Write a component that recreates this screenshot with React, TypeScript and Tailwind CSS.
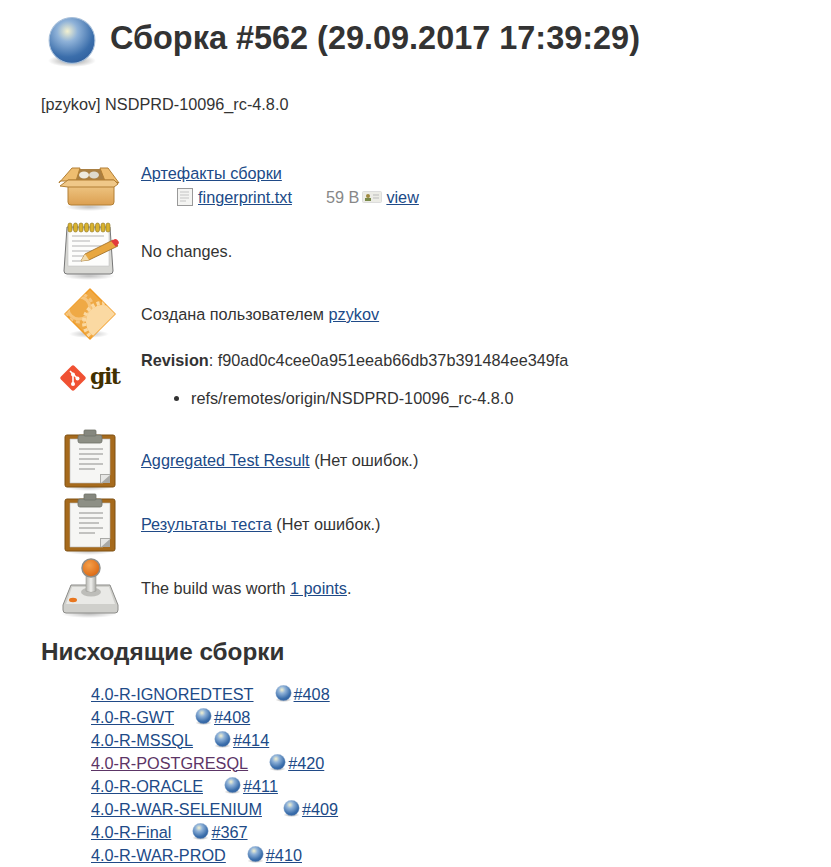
const downstream = [
  { name: "4.0-R-IGNOREDTEST", build: "#408" },
  { name: "4.0-R-GWT", build: "#408" },
  { name: "4.0-R-MSSQL", build: "#414" },
  { name: "4.0-R-POSTGRESQL", build: "#420", visited: true },
  { name: "4.0-R-ORACLE", build: "#411" },
  { name: "4.0-R-WAR-SELENIUM", build: "#409" },
  { name: "4.0-R-Final", build: "#367" },
  { name: "4.0-R-WAR-PROD", build: "#410" },
];

const link = "text-[#204a87] underline";

const Ball = ({ size, id }: { size: number; id: string }) => (
  <svg width={size} height={size} viewBox="0 0 48 48" className="shrink-0">
    <defs>
      <radialGradient id={id} cx="0.4" cy="0.3" r="0.75">
        <stop offset="0" stopColor="#f3f1d0" />
        <stop offset="0.3" stopColor="#8fb2d8" />
        <stop offset="0.75" stopColor="#3b6eab" />
        <stop offset="1" stopColor="#2f5f9e" />
      </radialGradient>
      <radialGradient id={id + "s"}>
        <stop offset="0" stopColor="#000" stopOpacity="0.4" />
        <stop offset="1" stopColor="#000" stopOpacity="0" />
      </radialGradient>
    </defs>
    <ellipse cx="24" cy="42" rx="23" ry="6" fill={`url(#${id}s)`} />
    <circle cx="24" cy="22.5" r="22" fill={`url(#${id})`} stroke="#a9c0da" strokeWidth="1" />
  </svg>
);

const Shadow = ({ id, cy, rx }: { id: string; cy: number; rx: number }) => (
  <>
    <defs>
      <radialGradient id={id}>
        <stop offset="0" stopColor="#000" stopOpacity="0.25" />
        <stop offset="1" stopColor="#000" stopOpacity="0" />
      </radialGradient>
    </defs>
    <ellipse cx="32" cy={cy} rx={rx} ry="4" fill={`url(#${id})`} />
  </>
);

const BoxIcon = () => (
  <svg width="64" height="64" viewBox="0 0 64 64" className="blur-[0.4px]">
    <defs>
      <linearGradient id="boxBody" x1="0" y1="0" x2="0" y2="1">
        <stop offset="0" stopColor="#f3cf8f" />
        <stop offset="1" stopColor="#dca052" />
      </linearGradient>
    </defs>
    <Shadow id="boxShadow" cy={50} rx={24} />
    <path d="M15 12H50L56 24H10Z" fill="#a97f42" />
    <ellipse cx="27" cy="18" rx="5" ry="3.5" fill="#eeeade" />
    <ellipse cx="37" cy="18" rx="5" ry="3.5" fill="#dedacd" />
    <path d="M15 11H23L19 24H3L2 26Z" fill="#eebd70" stroke="#b27f34" strokeWidth="1" strokeLinejoin="round" />
    <path d="M43 11H51L62 26L56 24H48Z" fill="#eebd70" stroke="#b27f34" strokeWidth="1" strokeLinejoin="round" />
    <path d="M11 23H57V45Q57 48 54 48H14Q11 48 11 45Z" fill="url(#boxBody)" stroke="#b27f34" strokeWidth="1" />
    <path d="M3 29L11 23H57L61 27L57 30H11Z" fill="#f0c888" stroke="#b27f34" strokeWidth="1" strokeLinejoin="round" />
  </svg>
);

const NotepadIcon = () => (
  <svg width="64" height="64" viewBox="0 0 64 64" className="blur-[0.4px]">
    <Shadow id="noteShadow" cy={57} rx={26} />
    <path d="M10 8H53L56 52Q56 55 53 55H10Q7 55 7 52Z" fill="#d8d8d4" stroke="#777" strokeWidth="1" />
    <rect x="11" y="10" width="41" height="37" fill="#fdfdfb" stroke="#bbb" strokeWidth="0.5" />
    {[13, 18.5, 24, 29.5, 35, 40.5, 46, 51].map((x) => (
      <rect key={x} x={x - 2} y="4" width="4" height="9" rx="2" fill="#d9b22e" stroke="#8b7420" strokeWidth="0.6" />
    ))}
    <g stroke="#b4b4b4" strokeWidth="1.2">
      <path d="M15 17H47M15 22H33M15 27H44M15 32H35M15 37H28M15 42H25" />
    </g>
    <path d="M24 42L28 35L56 21L61 27L32 41Z" fill="#e8a73f" stroke="#9a6a20" strokeWidth="0.8" />
    <path d="M24 42L28 35L32 41Z" fill="#f1dcae" />
    <path d="M54 22L58 20Q61 20 62 24L59 28Z" fill="#e23b3b" />
  </svg>
);

const GearIcon = () => (
  <svg width="64" height="64" viewBox="0 0 64 64" className="blur-[0.4px]">
    <defs>
      <clipPath id="gearClip">
        <path d="M33 7L58 32L33 57L8 32Z" />
      </clipPath>
    </defs>
    <Shadow id="gearShadow" cy={52} rx={20} />
    <path d="M33 7L58 32L33 57L8 32Z" fill="#efa945" stroke="#f09b25" strokeWidth="1.5" strokeLinejoin="round" />
    <g clipPath="url(#gearClip)">
      <circle cx="22" cy="26" r="11" fill="#efa945" stroke="#f6c57e" strokeWidth="3" />
      <circle cx="22" cy="26" r="14" fill="none" stroke="#f6c57e" strokeWidth="3" strokeDasharray="4 3" />
      <circle cx="46" cy="40" r="17" fill="#fbd9a2" />
      <circle cx="46" cy="40" r="19" fill="none" stroke="#fbd9a2" strokeWidth="4" strokeDasharray="3 2.5" />
    </g>
  </svg>
);

const GitLogo = () => (
  <div className="flex items-center gap-[4px] pl-[3px]">
    <svg width="26" height="26" viewBox="0 0 26 26">
      <path
        d="M11.5 1L1 11.5Q-.5 13 1 14.5L11.5 25Q13 26.5 14.5 25L25 14.5Q26.5 13 25 11.5L14.5 1Q13 -.5 11.5 1Z"
        fill="#f05133"
      />
      <path d="M10 6L13 9V19M13 9L17.5 13.5" stroke="#fff" strokeWidth="1.6" fill="none" />
      <circle cx="13" cy="9.5" r="2" fill="#fff" />
      <circle cx="13" cy="19" r="2" fill="#fff" />
      <circle cx="17.5" cy="13.5" r="2" fill="#fff" />
    </svg>
    <span className="font-['DejaVu_Serif',serif] text-[22px] leading-none font-bold text-[#413000] tracking-[-1.5px] -mt-[4px]">
      git
    </span>
  </div>
);

const ClipboardIcon = ({ id }: { id: string }) => (
  <svg width="64" height="64" viewBox="0 0 64 64" className="blur-[0.4px]">
    <Shadow id={id} cy={59} rx={24} />
    <rect x="8" y="7" width="50" height="52" rx="2" fill="#a66a1c" stroke="#7f5113" strokeWidth="1" />
    <path d="M13 11H53V47L46 55H13Z" fill="#f6f6f4" stroke="#bbb" strokeWidth="0.6" />
    <path d="M43 55V46H53V55Z" fill="#a9a9a6" />
    <path d="M44 55L53 47H44Z" fill="#e6e6e4" />
    <g stroke="#c2c2c0" strokeWidth="2">
      <path d="M22 21H46M22 26H46M22 31H42M22 36H46M22 41H38" />
    </g>
    <rect x="21" y="7" width="24" height="8" rx="2" fill="#8d8f85" stroke="#6f7168" strokeWidth="0.8" />
    <rect x="27" y="2" width="12" height="6" rx="1" fill="#85877e" stroke="#6f7168" strokeWidth="0.8" />
  </svg>
);

const JoystickIcon = () => (
  <svg width="64" height="64" viewBox="0 0 64 64" className="blur-[0.4px]">
    <defs>
      <radialGradient id="joyKnob" cx="0.4" cy="0.35" r="0.7">
        <stop offset="0" stopColor="#f5a04a" />
        <stop offset="1" stopColor="#d9640f" />
      </radialGradient>
      <linearGradient id="joyStick" x1="0" y1="0" x2="1" y2="0">
        <stop offset="0" stopColor="#b8b8b4" />
        <stop offset="0.5" stopColor="#efefec" />
        <stop offset="1" stopColor="#a8a8a4" />
      </linearGradient>
    </defs>
    <Shadow id="joyShadow" cy={58} rx={28} />
    <path d="M14 29H53L61 49V54Q61 57 58 57H9Q6 57 6 54V49Z" fill="#cfcfcb" stroke="#8b8b88" strokeWidth="1" />
    <path d="M15 31H52L58 48H9Z" fill="#e9e9e6" />
    <ellipse cx="34" cy="36" rx="10" ry="4.5" fill="#bdbdb9" />
    <path d="M29 18H39L39 35Q34 38 29 35Z" fill="url(#joyStick)" stroke="#9a9a96" strokeWidth="0.6" />
    <circle cx="34" cy="12" r="9" fill="url(#joyKnob)" stroke="#8e8e8a" strokeWidth="1.5" />
    <ellipse cx="16" cy="44" rx="4" ry="2.2" fill="#e8761e" />
  </svg>
);

const Row = ({
  icon,
  height,
  children,
}: {
  icon: React.ReactNode;
  height: string;
  children: React.ReactNode;
}) => (
  <div className={`flex items-center ${height}`}>
    <div className="w-[84px] ml-[16px] shrink-0">{icon}</div>
    <div>{children}</div>
  </div>
);

const App = () => {
  return (
    <div className="w-[831px] h-[867px] overflow-hidden bg-white text-[#333] font-['Liberation_Sans',sans-serif] text-[16.25px] leading-[24px]">
      <div className="flex items-center pl-[47px] pt-[17px] gap-[13px]">
        <Ball size={50} id="bigBall" />
        <h1 className="text-[32.45px] leading-[40px] font-bold -mt-[8px]">Сборка #562 (29.09.2017 17:39:29)</h1>
      </div>
      <div className="pl-[41px] mt-[25px]">[pzykov] NSDPRD-10096_rc-4.8.0</div>

      <div className="pl-[41px] mt-[36px]">
        <Row icon={<div className="pt-[8px]"><BoxIcon /></div>} height="h-[66px]">
          <a className={link}>Артефакты сборки</a>
          <div className="flex items-center pl-[35px]">
            <svg width="18" height="18" viewBox="0 0 18 18" className="mr-[4px]">
              <rect x="1.5" y="0.5" width="15" height="17" fill="#f4f4f2" stroke="#999" />
              <path d="M4 4H13M4 7H13M4 10H13M4 13H10" stroke="#c4c4c4" />
            </svg>
            <a className={link}>fingerprint.txt</a>
            <span className="ml-[34px] text-[#888]">59 B</span>
            <svg width="20" height="14" viewBox="0 0 20 14" className="ml-[3px] mr-[4px]">
              <rect x="0.5" y="1.5" width="19" height="11" rx="1" fill="#ecece6" stroke="#ddd" />
              <circle cx="6" cy="6" r="2" fill="#a08a40" />
              <rect x="3" y="8" width="6" height="3" fill="#7a8a4a" />
              <path d="M11 5H17M11 8H17" stroke="#bbb" />
            </svg>
            <a className={link}>view</a>
          </div>
        </Row>
        <Row icon={<NotepadIcon />} height="h-[66px]">
          No changes.
        </Row>
        <Row icon={<GearIcon />} height="h-[60px]">
          Создана пользователем <a className={link}>pzykov</a>
        </Row>
        <div className="flex h-[84px]">
          <div className="w-[84px] ml-[16px] shrink-0 pt-[21px]">
            <GitLogo />
          </div>
          <div className="pt-[4px]">
            <div>
              <b>Revision</b>: f90ad0c4cee0a951eeab66db37b391484ee349fa
            </div>
            <ul className="list-disc pl-[50px] mt-[14px]">
              <li>refs/remotes/origin/NSDPRD-10096_rc-4.8.0</li>
            </ul>
          </div>
        </div>
        <Row icon={<ClipboardIcon id="clipShadowA" />} height="h-[64px]">
          <a className={link}>Aggregated Test Result</a> (Нет ошибок.)
        </Row>
        <Row icon={<ClipboardIcon id="clipShadowB" />} height="h-[64px]">
          <a className={link}>Результаты теста</a> (Нет ошибок.)
        </Row>
        <Row icon={<JoystickIcon />} height="h-[64px]">
          The build was worth <a className={link}>1 points</a>.
        </Row>
      </div>

      <h2 className="pl-[41px] mt-[16px] text-[24.3px] leading-[32px] font-bold">Нисходящие сборки</h2>

      <div className="pl-[91px] mt-[14px] flex flex-col">
        {downstream.map((item, i) => (
          <div key={item.name} className="flex items-center h-[23px]">
            <a className={item.visited ? "text-[#5c3566] underline" : link}>{item.name}</a>
            <span className="ml-[21px] mr-[2px]">
              <Ball size={17} id={`ball${i}`} />
            </span>
            <a className={link}>{item.build}</a>
          </div>
        ))}
      </div>
    </div>
  );
};

export default App;
